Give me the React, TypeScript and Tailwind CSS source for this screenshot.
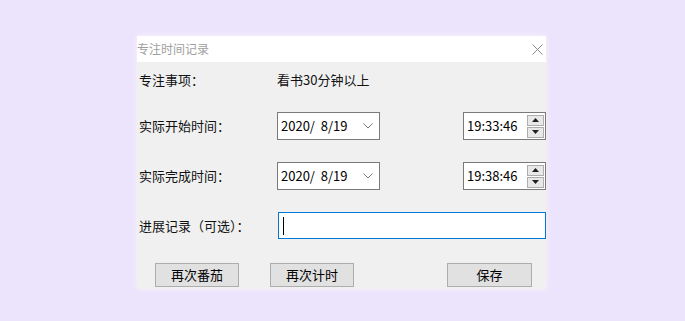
import React from 'react';

const font = { fontFamily: '"Noto Sans CJK SC", "Noto Sans", sans-serif' };

const Chevron = () => (
  <svg width="10" height="6" viewBox="0 0 10 6" className="text-[#7a7a7a]">
    <path d="M0.5 0.5 L5 5 L9.5 0.5" fill="none" stroke="currentColor" strokeWidth="1" />
  </svg>
);

const Spinner = () => (
  <div className="flex flex-col gap-[1px] ml-auto mr-[1px]">
    {['up', 'down'].map((d) => (
      <div
        key={d}
        className="w-[17px] h-[11px] bg-[#e8e8e8] border border-[#adadad] flex items-center justify-center"
      >
        <svg width="7" height="4" viewBox="0 0 7 4">
          {d === 'up' ? <path d="M0 4 L3.5 0 L7 4 Z" fill="#222" /> : <path d="M0 0 L3.5 4 L7 0 Z" fill="#222" />}
        </svg>
      </div>
    ))}
  </div>
);

const DateTimeRow = ({ label, time }: { label: string; time: string }) => (
  <div className="flex items-center h-[28px]">
    <span className="w-[140px] pl-[2px] text-[13px] text-[#111]">{label}</span>
    <div className="w-[103px] h-full border border-[#7a7a7a] bg-white flex items-center pl-[3px] pr-[6px]">
      <span className="text-[13px] text-black">2020/&nbsp;&nbsp;8/19</span>
      <span className="ml-auto"><Chevron /></span>
    </div>
    <div className="ml-[83px] w-[83px] h-full border border-[#7a7a7a] bg-white flex items-center pl-[3px]">
      <span className="text-[13px] text-black">{time}</span>
      <Spinner />
    </div>
  </div>
);

const Btn = ({ children, w }: { children: React.ReactNode; w: string }) => (
  <button className={`${w} h-[24px] bg-[#e1e1e1] border border-[#adadad] text-[13px] text-black flex items-center justify-center`}>
    {children}
  </button>
);

export default function App() {
  return (
    <div className="w-[685px] h-[321px] bg-[#ece4fc] pl-[137px] pt-[36px]" style={font}>
      <div className="w-[409px] shadow-[0_0_6px_rgba(255,255,255,0.6)]">
        <div className="h-[26px] bg-white flex items-center justify-between">
          <span className="text-[12px] text-[#a0a0a0]">专注时间记录</span>
          <svg width="11" height="11" viewBox="0 0 11 11" className="mr-[3px]">
            <path d="M0.5 0.5 L10.5 10.5 M10.5 0.5 L0.5 10.5" stroke="#8a8a8a" strokeWidth="1" />
          </svg>
        </div>
        <div className="bg-[#f0f0f0] h-[227px] pt-[6px] flex flex-col">
          <div className="flex items-center h-[24px]">
            <span className="w-[140px] pl-[2px] text-[13px] text-[#111]">专注事项：</span>
            <span className="text-[13px] text-[#111]">看书30分钟以上</span>
          </div>
          <div className="mt-[20px]">
            <DateTimeRow label="实际开始时间：" time="19:33:46" />
          </div>
          <div className="mt-[22px]">
            <DateTimeRow label="实际完成时间：" time="19:38:46" />
          </div>
          <div className="mt-[22px] flex items-center h-[27px]">
            <span className="w-[141px] pl-[2px] text-[13px] text-[#111]">进展记录（可选）：</span>
            <div className="flex-1 h-full border border-[#0078d7] bg-white flex items-center pl-[4px]">
              <div className="w-[1px] h-[18px] bg-black" />
            </div>
          </div>
          <div className="mt-[24px] flex items-center">
            <div className="ml-[18px]"><Btn w="w-[84px]">再次番茄</Btn></div>
            <div className="ml-[31px]"><Btn w="w-[84px]">再次计时</Btn></div>
            <div className="ml-[93px]"><Btn w="w-[85px]">保存</Btn></div>
          </div>
        </div>
      </div>
    </div>
  );
}
